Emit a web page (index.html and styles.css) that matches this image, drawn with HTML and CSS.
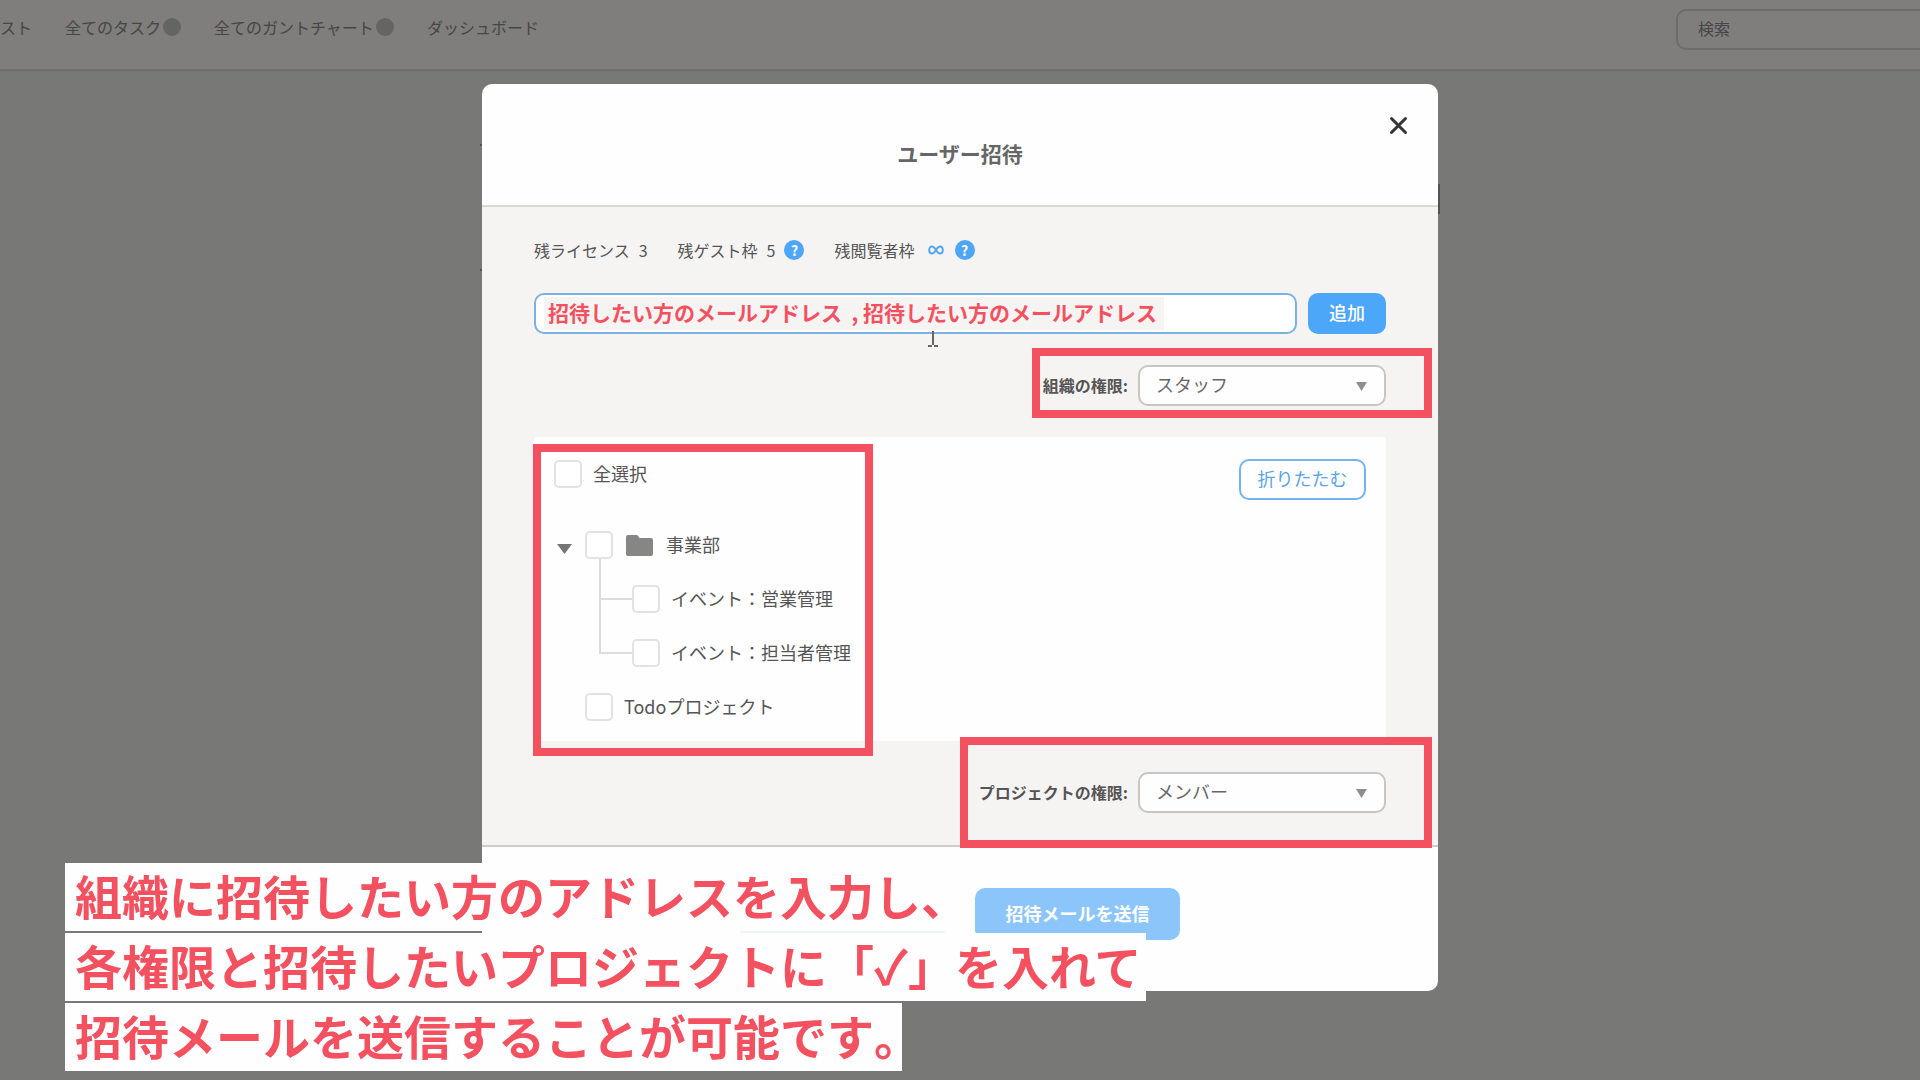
FILE: index.html
```html
<!DOCTYPE html>
<html lang="ja">
<head>
    <meta charset="UTF-8">
    <meta name="viewport" content="width=device-width, initial-scale=1.0">
    <title>ユーザー招待</title>
    <link rel="stylesheet" href="styles.css">
</head>
<body>
    <header class="topbar">
        <nav class="nav">
            <a href="#">スト</a>
            <a href="#">全てのタスク<span class="badge"></span></a>
            <a href="#">全てのガントチャート<span class="badge"></span></a>
            <a href="#">ダッシュボード</a>
        </nav>
        <input class="search" type="text" placeholder="検索" aria-label="検索">
    </header>

    <div class="overlay">
        <div class="modal" role="dialog" aria-labelledby="modalTitle">
            <span class="edge edge-left-top"></span>
            <span class="edge edge-left-bottom"></span>
            <span class="edge edge-right"></span>

            <div class="modal-header">
                <h1 id="modalTitle">ユーザー招待</h1>
                <button class="close" type="button" aria-label="閉じる">
                    <svg width="19" height="19" viewBox="0 0 19 19">
                        <path d="M2.5 2.5 16.5 16.5M16.5 2.5 2.5 16.5" stroke="#333436" stroke-width="3" stroke-linecap="round"/>
                    </svg>
                </button>
            </div>

            <form class="modal-body" id="inviteForm">
                <div class="quota">
                    <span class="quota-item">残ライセンス <span>3</span></span>
                    <span class="quota-item">残ゲスト枠 <span>5</span> <button class="help" type="button">?</button></span>
                    <span class="quota-item">残閲覧者枠
                        <svg class="infinity" width="16" height="10" viewBox="0 0 16 10">
                            <path d="M8 5C6.600 2.600 5.500 1.500 4 1.500 2.300 1.500 1.200 3 1.200 5S2.300 8.500 4 8.500C5.500 8.500 6.600 7.400 8 5s2.500-3.500 4-3.500c1.700 0 2.800 1.500 2.800 3.500S13.700 8.500 12 8.500C10.500 8.500 9.400 7.400 8 5Z" fill="none" stroke="#5aa6e8" stroke-width="2"/>
                        </svg>
                        <button class="help" type="button">?</button>
                    </span>
                </div>

                <div class="address">
                    <input class="address-input" type="text" aria-label="メールアドレス" value="招待したい方のメールアドレス  , 招待したい方のメールアドレス">
                    <button class="btn btn-add" type="button">追加</button>
                    <svg class="cursor" width="12" height="16" viewBox="0 0 12 16">
                        <path d="M6 0v14M1 15h4M7 15h4" stroke="#666" stroke-width="2"/>
                    </svg>
                </div>

                <div class="role">
                    <span class="frame frame-org"></span>
                    <label for="orgRole">組織の権限:</label>
                    <div class="select">
                        <select id="orgRole"><option>スタッフ</option></select>
                    </div>
                </div>

                <div class="panel">
                    <span class="frame frame-tree"></span>
                    <ul class="tree">
                        <li class="row row-all">
                            <input type="checkbox" id="all"><label for="all">全選択</label>
                        </li>
                        <li>
                            <div class="row row-folder">
                                <span class="caret"></span>
                                <input type="checkbox" id="division">
                                <svg class="folder" width="27" height="21" viewBox="0 0 27 21">
                                    <path d="M2 0h8.500a2 2 0 0 1 1.600 1l1.300 2H25a2 2 0 0 1 2 2v14a2 2 0 0 1-2 2H2a2 2 0 0 1-2-2V2a2 2 0 0 1 2-2Z" fill="#868685"/>
                                </svg>
                                <label for="division">事業部</label>
                            </div>
                            <ul class="branch">
                                <li class="row"><input type="checkbox" id="sales"><label for="sales">イベント：営業管理</label></li>
                                <li class="row"><input type="checkbox" id="staff"><label for="staff">イベント：担当者管理</label></li>
                            </ul>
                        </li>
                        <li class="row row-project">
                            <input type="checkbox" id="todo"><label for="todo">Todoプロジェクト</label>
                        </li>
                    </ul>
                    <button class="btn btn-fold" type="button">折りたたむ</button>
                </div>

                <div class="role">
                    <span class="frame frame-project"></span>
                    <label for="projectRole">プロジェクトの権限:</label>
                    <div class="select">
                        <select id="projectRole"><option>メンバー</option></select>
                    </div>
                </div>
            </form>

            <div class="modal-footer">
                <button class="btn-cancel" type="button" aria-label="キャンセル"></button>
                <button class="btn-send" type="submit" form="inviteForm">招待メールを送信</button>
            </div>
        </div>
    </div>

    <div class="caption">
        <p>組織に招待したい方のアドレスを入力し<span class="half">、</span></p>
        <p>各権限と招待したいプロジェクトに「<span class="check">✓</span>」を入れて</p>
        <p>招待メールを送信することが可能です<span class="half">。</span></p>
    </div>
</body>
</html>
```
FILE: styles.css
```css
* {
    box-sizing: border-box;
}
body {
    font-family: "Noto Sans CJK JP", sans-serif;
    font-size: 16px;
    line-height: 24px;
    margin: 0;
    min-height: 100vh;
    overflow: hidden;
    background-color: #f0f0ec;
    color: #555;
}
input, select, button {
    font-family: inherit;
    margin: 0;
}
button {
    padding: 0;
    border: none;
    cursor: pointer;
}
ul, h1, p {
    margin: 0;
    padding: 0;
    list-style: none;
}

/* top bar */
.topbar {
    display: flex;
    justify-content: space-between;
    height: 71px;
    padding-top: 9px;
    background: #fefcf8;
    border-bottom: 2px solid #dcdcda;
}
.nav {
    display: flex;
    gap: 33px;
    padding-top: 6px;
}
.nav a {
    display: flex;
    align-items: center;
    height: 24px;
    color: #8c8c8c;
    text-decoration: none;
}
.badge {
    width: 18px;
    height: 18px;
    margin-left: 2px;
    border-radius: 50%;
    background: #c8c8c6;
}
.search {
    width: 300px;
    height: 41px;
    margin-right: -56px;
    padding: 0 20px 3px;
    border: 2px solid #d8d8d6;
    border-radius: 10px;
    background: none;
    font-size: 16px;
}
.search::placeholder {
    color: #8c8c8c;
}

/* modal */
.overlay {
    position: fixed;
    inset: 0;
    display: flex;
    align-items: flex-start;
    justify-content: center;
    padding-top: 84px;
    background: rgba(0,0,0,0.5);
}
.modal {
    position: relative;
    width: 50%;
    max-width: 956px;
    border-radius: 10px;
    background: #fefefe;
}
.modal-header {
    padding: 53px 0 36px;
    border-bottom: 2px solid #dbd9d6;
    text-align: center;
}
.modal-header h1 {
    font-size: 21px;
    line-height: 32px;
    color: #666;
}
.close {
    position: absolute;
    top: 32px;
    right: 30px;
    width: 19px;
    height: 19px;
    background: none;
}
.close svg {
    display: block;
}
.modal-body {
    display: flex;
    flex-direction: column;
    gap: 31px;
    padding: 31px 52px 32px;
    background: #f5f4f3;
}

/* parts of the page behind that stick out at the modal's sides */
.edge {
    position: absolute;
    z-index: -1;
    width: 3px;
    background: #505254;
}
.edge-left-top {
    top: 60px;
    left: -2px;
    height: 2px;
}
.edge-left-bottom {
    top: 185px;
    left: -2px;
    height: 2px;
}
.edge-right {
    top: 100px;
    right: -2px;
    height: 30px;
}

.quota {
    display: flex;
    gap: 30px;
}
.quota-item {
    display: flex;
    align-items: center;
    gap: 9px;
}
.infinity {
    margin: 0 2px 0 4px;
}
.help {
    width: 20px;
    height: 20px;
    border-radius: 50%;
    background: #4da6f7;
    color: #fff;
    font-size: 14px;
    font-weight: bold;
    line-height: 19px;
}

.address {
    position: relative;
    display: flex;
    gap: 11px;
}
.address-input {
    flex: 1;
    height: 41px;
    padding: 0 12px 3px;
    border: 2px solid #7ab3e3;
    border-radius: 10px;
    background: linear-gradient(#f5f4f3, #f5f4f3) no-repeat 8px 2px / 620px 33px #fff;
    color: #f35160;
    font-size: 21px;
    font-weight: bold;
}
.btn {
    height: 41px;
    padding-bottom: 3px;
    border-radius: 10px;
    font-size: 18px;
}
.btn-add {
    width: 78px;
    background: #4da7f8;
    color: #fff;
    font-weight: 500;
}
.cursor {
    position: absolute;
    top: 38px;
    left: 393px;
}

.role {
    position: relative;
    display: flex;
    justify-content: flex-end;
    align-items: center;
    gap: 10px;
}
.role label {
    padding-bottom: 2px;
    font-weight: bold;
}
.select {
    position: relative;
    width: 248px;
}
.select::after {
    content: "";
    position: absolute;
    top: 17px;
    right: 19px;
    width: 11px;
    height: 9px;
    background: #8e8e8e;
    clip-path: polygon(0 0, 100% 0, 50% 100%);
}
.select select {
    display: block;
    width: 100%;
    height: 41px;
    padding: 0 16px 3px;
    appearance: none;
    border: 2px solid #c8c6c4;
    border-radius: 10px;
    background: #fefefe;
    color: #666;
    font-size: 18px;
}

/* red frames round the parts the caption talks about */
.frame {
    position: absolute;
    z-index: 1;
    border: 8px solid #f35160;
    pointer-events: none;
}
.frame-org {
    top: -17px;
    right: -46px;
    bottom: -12px;
    width: 400px;
}
.frame-tree {
    top: 7px;
    bottom: -15px;
    left: -1px;
    width: 340px;
}
.frame-project {
    top: -35px;
    right: -46px;
    bottom: -35px;
    width: 472px;
}

/* project tree */
.panel {
    position: relative;
    display: flex;
    justify-content: space-between;
    align-items: flex-start;
    padding: 22px 20px 20px;
    background: #fefefe;
    font-size: 18px;
}
.tree {
    padding-top: 1px;
}
.row {
    display: flex;
    align-items: center;
    gap: 11px;
    height: 28px;
    margin-bottom: 26px;
}
.row input {
    width: 28px;
    height: 28px;
    appearance: none;
    border: 2px solid #e4e2e0;
    border-radius: 5px;
    background: #fff;
}
.row-all {
    margin-bottom: 43px;
}
.row-folder {
    padding-left: 3px;
    gap: 13px;
}
.row label {
    padding-bottom: 2px;
}
.caret {
    width: 15px;
    height: 10px;
    margin-top: 8px;
    background: #757575;
    clip-path: polygon(0 0, 100% 0, 50% 100%);
}
.branch {
    position: relative;
    margin-left: 45px;
}
.branch::before {
    content: "";
    position: absolute;
    top: -26px;
    bottom: 13px;
    left: 0;
    width: 2px;
    background: #dedcda;
}
.branch .row {
    gap: 0;
}
.branch .row::before {
    content: "";
    width: 33px;
    height: 2px;
    background: #dedcda;
}
.branch label {
    margin-left: 11px;
}
.row-project {
    margin-bottom: 0;
    padding-left: 31px;
}
.btn-fold {
    width: 127px;
    border: 2px solid #74b4ec;
    background: #fefefe;
    color: #5ba5e5;
}

.modal-footer {
    display: flex;
    justify-content: center;
    gap: 30px;
    padding: 41px 0 51px;
    border-top: 2px solid #cfcdcc;
}
.btn-cancel, .btn-send {
    width: 205px;
    height: 52px;
    border-radius: 10px;
}
.btn-cancel {
    background: #eaf3fb;
}
.btn-send {
    padding-bottom: 3px;
    background: #8bc5fa;
    color: #fff;
    font-size: 18px;
    font-weight: bold;
}

/* caption */
.caption {
    position: fixed;
    left: 65px;
    bottom: 9px;
    display: flex;
    flex-direction: column;
    align-items: flex-start;
    gap: 2px;
    color: #f35160;
    font-size: 47px;
    font-weight: bold;
    line-height: 64px;
}
.caption p {
    height: 68px;
    padding: 0 4px 0 10px;
    background: #fefefe;
    white-space: nowrap;
}
.half {
    font-feature-settings: "halt";
}
```
